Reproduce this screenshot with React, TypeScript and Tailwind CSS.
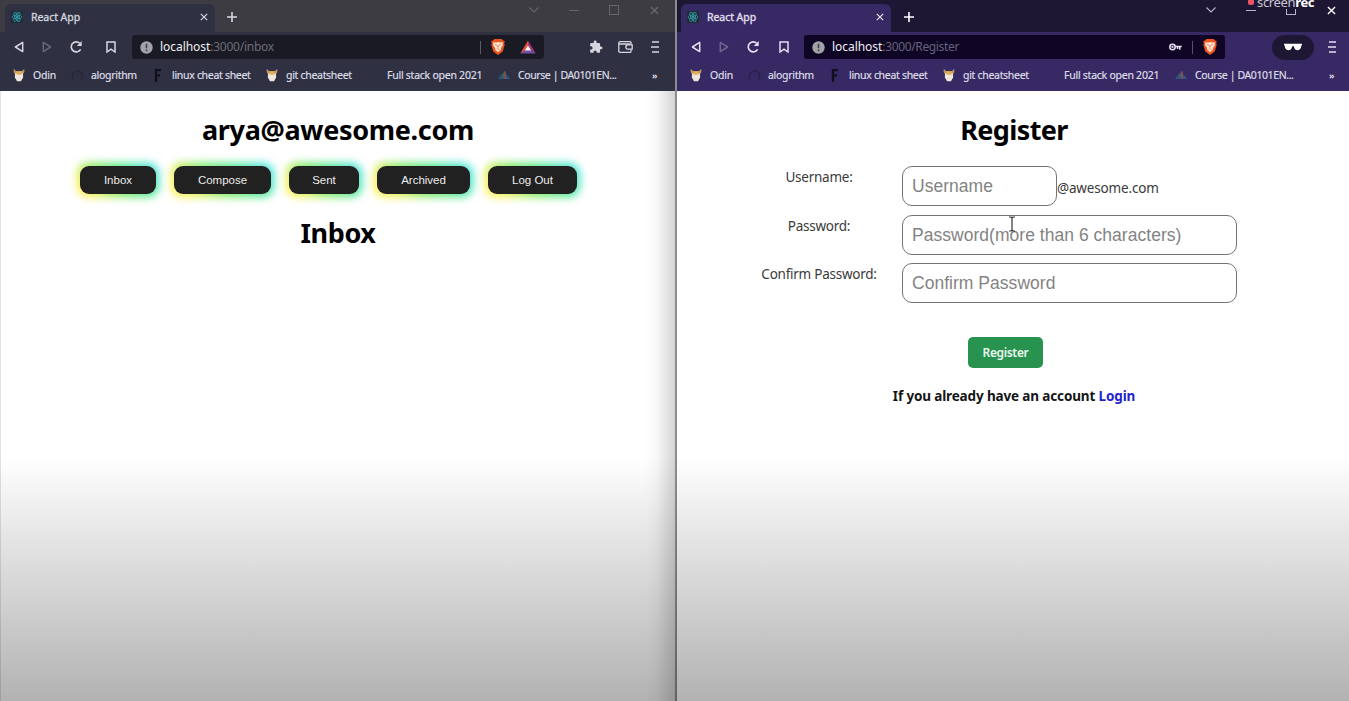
import React from "react";

function ReactLogo() {
  return (
    <svg width="12" height="12" viewBox="0 0 24 24" fill="none" stroke="#2f8c98" strokeWidth="1.8">
      <rect width="24" height="24" fill="#1f2d38" stroke="none" />
      <ellipse cx="12" cy="12" rx="10" ry="4" />
      <ellipse cx="12" cy="12" rx="10" ry="4" transform="rotate(60 12 12)" />
      <ellipse cx="12" cy="12" rx="10" ry="4" transform="rotate(120 12 12)" />
      <circle cx="12" cy="12" r="2" fill="#4fb3c0" />
    </svg>
  );
}

function CrossIcon({ size }: { size: number }) {
  return (
    <svg width={size} height={size} viewBox="0 0 10 10" stroke="currentColor" strokeWidth="1.5">
      <path d="M1 1l8 8M9 1l-8 8" />
    </svg>
  );
}

function PlusIcon() {
  return (
    <svg width="10" height="10" viewBox="0 0 10 10" stroke="currentColor" strokeWidth="1.6">
      <path d="M5 0v10M0 5h10" />
    </svg>
  );
}

function TriangleIcon({ flip, dim }: { flip?: boolean; dim?: boolean }) {
  return (
    <svg width="10" height="12" viewBox="0 0 10 12" fill="none" stroke="currentColor" strokeWidth="1.5" strokeLinejoin="round" opacity={dim ? 0.32 : 1}>
      <path d={flip ? "M1.3 1.4v9.2L8.6 6z" : "M8.7 1.4v9.2L1.4 6z"} />
    </svg>
  );
}

function ReloadIcon() {
  return (
    <svg width="14" height="14" viewBox="0 0 14 14" fill="none" stroke="currentColor" strokeWidth="1.700">
      <path d="M11.6 9.3A5 5 0 1 1 10.6 3.2" />
      <path d="M12.7 1v4.900H7.800z" fill="currentColor" stroke="none" />
    </svg>
  );
}

function BookmarkIcon() {
  return (
    <svg width="10" height="12" viewBox="0 0 10 12" fill="none" stroke="currentColor" strokeWidth="1.5">
      <path d="M1 1h8v10L5 8.2 1 11z" />
    </svg>
  );
}

function InfoIcon() {
  return (
    <svg width="13" height="13" viewBox="0 0 13 13">
      <circle cx="6.5" cy="6.5" r="6.2" fill="#a0a3a8" />
      <path d="M6.5 2.7v4.6M6.5 8.6v1.7" stroke="#41424b" strokeWidth="1.6" />
    </svg>
  );
}

function BraveIcon() {
  return (
    <svg width="16" height="18" viewBox="0 0 16 18">
      <path d="M4.3 1h7.4l1.3 1.5 1.8.6-.6 2.2.5 1.5-2 6.8L8 17l-4.7-3.4-2-6.8.5-1.500-.6-2.200L3 2.500z" fill="#ee551f" />
      <path d="M3.300 4.300l2.900.2L8 4.100l1.800.4 2.900-.2.2 2.600-2 3.100.1 1.600L8 14.300l-3-2.700.1-1.600-2-3.100z" fill="#fbe3d2" />
      <path d="M4.800 6.200l2 .8L8 9.400l1.200-2.400 2-.8M6.600 11.500L8 10.800l1.400.7" fill="none" stroke="#ee8a60" strokeWidth=".9" />
    </svg>
  );
}

function RewardsIcon() {
  return (
    <svg width="16" height="14" viewBox="0 0 16 14">
      <path d="M8 .5L.3 13.500 8 9z" fill="#e2553b" />
      <path d="M8 .5l7.700 13L8 9z" fill="#a23a76" />
      <path d="M.3 13.500h15.400L8 8.500z" fill="#7150a5" />
      <path d="M8 5.500l-3 5h6z" fill="#fff" />
    </svg>
  );
}

function PuzzleIcon() {
  return (
    <svg width="14" height="14" viewBox="0 0 24 24" fill="currentColor">
      <path d="M20.500 11H19V7a2 2 0 0 0-2-2h-4V3.500a2.500 2.500 0 0 0-5 0V5H4a2 2 0 0 0-2 2v3.800h1.500a2.700 2.700 0 0 1 0 5.400H2V20a2 2 0 0 0 2 2h3.800v-1.500a2.700 2.700 0 0 1 5.400 0V22H17a2 2 0 0 0 2-2v-4h1.500a2.500 2.500 0 0 0 0-5z" />
    </svg>
  );
}

function WalletIcon() {
  return (
    <svg width="15" height="12" viewBox="0 0 15 12" fill="none" stroke="currentColor" strokeWidth="1.300">
      <path d="M13 3.800V1.500A.8.800 0 0 0 12.200.7H2A1.200 1.200 0 0 0 .8 2v8A1.200 1.200 0 0 0 2 11.300h10.200a.8.800 0 0 0 .8-.8V8.300M1 3h11" />
      <path d="M14.200 3.900H10a2.100 2.100 0 0 0 0 4.300h4.200z" />
    </svg>
  );
}

function MenuIcon() {
  return (
    <svg width="9" height="12" viewBox="0 0 9 12" stroke="currentColor" strokeWidth="1.300">
      <path d="M1 1h7M0 6h8M1 11h7" />
    </svg>
  );
}

function KeyIcon() {
  return (
    <svg width="13" height="8" viewBox="0 0 13 8" fill="none" stroke="currentColor" strokeWidth="1.500">
      <circle cx="3.500" cy="4" r="2.700" />
      <path d="M6.200 3.400h6.500M10.800 3.400v3.400M8.600 3.400V6" />
      <circle cx="3.500" cy="4" r=".4" />
    </svg>
  );
}

function GlassesIcon() {
  return (
    <svg width="18" height="8" viewBox="0 0 18 8" fill="#fff">
      <path d="M0 .8h18v1.300l-.7.500c-.2 2.800-1.200 4.600-3.600 4.600-2.300 0-3.500-1.400-3.800-3.800L9 2.900l-.9.500C7.800 5.800 6.600 7.200 4.300 7.200 1.900 7.200.9 5.400.7 2.600L0 2.100z" />
    </svg>
  );
}

function ChevronIcon() {
  return (
    <svg width="10" height="6" viewBox="0 0 10 6" fill="none" stroke="currentColor" strokeWidth="1.100">
      <path d="M.5.500L5 5 9.500.500" />
    </svg>
  );
}

function OdinIcon() {
  return (
    <svg width="12" height="14" viewBox="0 0 12 14">
      <path d="M.8.800l2 2.200h6.400l2-2.200.2 3.200-1.600 2.500H2.200L.6 4z" fill="#c59562" />
      <path d="M2 5.500h8l.1 4L8 13.300H4L1.900 9.500z" fill="#eee6df" />
      <path d="M3.200 3.400h5.600L8.300 6.800H3.700z" fill="#ddb05b" />
    </svg>
  );
}

function RingIcon() {
  return (
    <svg width="13" height="13" viewBox="0 0 13 13" fill="none" stroke="#171927" strokeWidth="1.500" opacity=".45">
      <path d="M2.500 10.500a5.200 5.200 0 1 1 8 0" />
    </svg>
  );
}

function LetterIcon() {
  return (
    <svg width="8" height="13" viewBox="0 0 8 13" stroke="#10101c" strokeWidth="2.300" fill="none">
      <path d="M2 13V1.200h5M2 6.300h4" />
    </svg>
  );
}

function CourseIcon() {
  return (
    <svg width="12" height="10" viewBox="0 0 12 10" opacity=".65">
      <path d="M0 9l3-4 2 4z" fill="#286f9b" />
      <path d="M3 5l3-3v7H5z" fill="#367f78" />
      <path d="M6 1l2 1v7H6z" fill="#a95f4b" />
      <path d="M8 4l4 5H8z" fill="#3c6dad" />
    </svg>
  );
}

function Bookmark({ icon, text, box, track }: { icon: React.ReactNode; text: string; box: string; track: string }) {
  return (
    <div className={`flex shrink-0 items-center ${box}`}>
      <span className="mr-1.5 flex w-4 shrink-0 justify-center">{icon}</span>
      <span className={`whitespace-nowrap [-webkit-text-stroke:0.2px] ${track}`}>{text}</span>
    </div>
  );
}

function BookmarkBar() {
  return (
    <div className="flex h-[29px] items-center pb-[3px] pl-[11px] text-[10.5px] leading-none text-[#dddce6]">
      <Bookmark icon={<OdinIcon />} text="Odin" box="w-[58px]" track="tracking-[-0.2px]" />
      <Bookmark icon={<RingIcon />} text="alogrithm" box="w-[81px]" track="tracking-[-0.3px]" />
      <Bookmark icon={<LetterIcon />} text="linux cheat sheet" box="w-[114px]" track="tracking-[-0.3px]" />
      <Bookmark icon={<OdinIcon />} text="git cheatsheet" box="w-[101px]" track="tracking-[-0.3px]" />
      <Bookmark icon={<span />} text="Full stack open 2021" box="w-[131px]" track="tracking-[-0.25px]" />
      <Bookmark icon={<CourseIcon />} text="Course | DA0101EN..." box="w-[156px]" track="tracking-[-0.4px]" />
      <span className="text-[9px] font-bold">»</span>
    </div>
  );
}

function Tab({ className }: { className: string }) {
  return (
    <div className={`flex h-7 w-[210px] items-center self-end rounded-t-md pr-[7px] pb-[2px] pl-[6px] ${className}`}>
      <ReactLogo />
      <span className="ml-[8px] flex-1 text-[10.5px] leading-none tracking-[-0.05px] [-webkit-text-stroke:0.3px]">React App</span>
      <CrossIcon size={8} />
    </div>
  );
}

function InboxWindow() {
  const buttons = [
    { label: "Inbox", size: "w-[76px]" },
    { label: "Compose", size: "w-[97px]" },
    { label: "Sent", size: "w-[70px]" },
    { label: "Archived", size: "w-[93px]" },
    { label: "Log Out", size: "w-[89px]" },
  ];
  return (
    <section className="flex h-full w-[675px] shrink-0 flex-col">
      <header className="h-[91px] shrink-0 bg-[#2f3142] text-[#d5d6df]">
        <div className="flex h-8 items-center bg-[#3d3c42] pl-[5px]">
          <Tab className="bg-[#2f3142]" />
          <span className="mt-[2px] ml-[12px]"><PlusIcon /></span>
          <div className="ml-auto flex items-center pr-[16px] pb-3 text-[#67666d]">
            <ChevronIcon />
            <span className="ml-[30px] h-px w-[10px] bg-current" />
            <span className="ml-[30px] size-[10px] border border-current" />
            <span className="ml-[31px]"><CrossIcon size={9} /></span>
          </div>
        </div>
        <div className="flex h-[30px] items-center">
          <div className="flex w-[132px] items-center pb-px pl-[14px]">
            <TriangleIcon />
            <span className="ml-[18px]"><TriangleIcon flip dim /></span>
            <span className="ml-[17px]"><ReloadIcon /></span>
            <span className="ml-[23px]"><BookmarkIcon /></span>
          </div>
          <div className="flex h-6 w-[412px] items-center rounded-[3px] bg-[#1a1a25] pl-[8px]">
            <InfoIcon />
            <span className="ml-[7px] text-[12px] leading-none tracking-[-0.05px] text-[#eeeef2]">localhost<span className="tracking-[-0.25px] text-[#6c6c75]">:3000/inbox</span></span>
            <span className="mr-[9px] ml-auto h-[13px] w-px bg-[#5c5c66]" />
            <BraveIcon />
            <span className="mr-[8px] ml-[14px]"><RewardsIcon /></span>
          </div>
          <span className="ml-[45px]"><PuzzleIcon /></span>
          <span className="ml-[15px]"><WalletIcon /></span>
          <span className="ml-[18px]"><MenuIcon /></span>
        </div>
        <BookmarkBar />
      </header>
      <main className="flex flex-1 flex-col border-l border-[#e2e2e2]">
        <h1 className="mt-[19px] text-center text-[27px] leading-[40px] font-bold tracking-[-0.32px] text-black">arya@awesome.com</h1>
        <nav className="mt-[16px] flex items-center gap-[18px] pl-[79px]">
          {buttons.map((b) => (
            <div key={b.label} className="relative">
              <div className="absolute -inset-[3px] rounded-[11px] bg-[linear-gradient(45deg,#fff04a_0%,#f3ef4d_18%,#7ce85a_42%,#4ce68a_65%,#3fe0ee_100%)] blur-[4px]" />
              <button className={`relative block h-7 rounded-[9px] bg-[#222122] font-['Liberation_Sans',sans-serif] text-[11.5px] leading-7 text-[#ececec] ${b.size}`}>{b.label}</button>
            </div>
          ))}
        </nav>
        <h2 className="mt-[19px] text-center text-[27px] leading-[40px] font-bold tracking-[-0.4px] text-black">Inbox</h2>
      </main>
    </section>
  );
}

function Field({ label, placeholder, narrow }: { label: string; placeholder: string; narrow?: boolean }) {
  return (
    <div className="flex h-10 items-center">
      <label className="w-[170px] self-start pt-px text-center text-[13.5px] leading-[20px] tracking-[-0.25px] text-[#3a3a3a]">{label}</label>
      <input
        placeholder={placeholder}
        className={`ml-[-2px] h-10 rounded-[10px] border border-[#747474] bg-white pt-px pl-[9px] font-['Liberation_Sans',sans-serif] text-[17.5px] tracking-[0.03px] outline-none placeholder:text-[#838383] ${narrow ? "w-[155px]" : "w-[335px]"}`}
      />
      {narrow && <span className="mt-[4px] text-[13.5px] tracking-[-0.17px] text-[#3a3a3a]">@awesome.com</span>}
    </div>
  );
}

function RegisterWindow() {
  return (
    <section className="flex h-full flex-1 flex-col">
      <header className="h-[91px] shrink-0 bg-[#372963] text-[#e6e0f1]">
        <div className="flex h-8 items-center bg-[#1d1733] pl-[4px]">
          <Tab className="bg-[#372963]" />
          <span className="mt-[2px] ml-[13px] text-white"><PlusIcon /></span>
          <div className="relative ml-auto flex items-center pr-[13px] pb-3 text-[#b9b4c5]">
            <ChevronIcon />
            <span className="ml-[30px] h-px w-[10px] bg-current" />
            <span className="ml-[30px] size-[10px] border border-current" />
            <span className="ml-[31px] text-white"><CrossIcon size={9} /></span>
            <span className="absolute top-[-10px] left-[42px] flex h-[14px] items-center text-[13px] leading-none tracking-[-0.35px] text-[#c8c5d0]">
              <span className="mr-[3px] size-[6px] rounded-[2px] bg-[#ed5565]" />
              <span className="flex h-[14px] items-center bg-[#1d1733]">screen<b className="text-white">rec</b></span>
            </span>
          </div>
        </div>
        <div className="flex h-[30px] items-center">
          <div className="flex w-[127px] items-center pb-px pl-[14px]">
            <TriangleIcon />
            <span className="ml-[18px]"><TriangleIcon flip dim /></span>
            <span className="ml-[17px]"><ReloadIcon /></span>
            <span className="ml-[19px]"><BookmarkIcon /></span>
          </div>
          <div className="flex h-6 w-[421px] items-center rounded-[3px] bg-[#0e0624] pl-[8px]">
            <InfoIcon />
            <span className="ml-[7px] text-[12px] leading-none tracking-[-0.05px] text-[#f0eef5]">localhost<span className="tracking-[-0.35px] text-[#68627b]">:3000/Register</span></span>
            <span className="ml-auto"><KeyIcon /></span>
            <span className="mr-[9px] ml-[10px] h-[13px] w-px bg-[#575069]" />
            <span className="mr-[7px]"><BraveIcon /></span>
          </div>
          <span className="ml-[47px] flex h-[25px] w-[42px] items-center justify-center rounded-full bg-[#1d1733]"><GlassesIcon /></span>
          <span className="ml-[14px]"><MenuIcon /></span>
        </div>
        <BookmarkBar />
      </header>
      <main className="relative flex flex-1 flex-col">
        <h1 className="mt-[19px] pl-[2px] text-center text-[27px] leading-[40px] font-bold tracking-[-0.6px] text-black">Register</h1>
        <form className="mt-[16px] flex flex-col gap-[8.5px] pl-[57px]">
          <Field label="Username:" placeholder="Username" narrow />
          <Field label="Password:" placeholder="Password(more than 6 characters)" />
          <Field label="Confirm Password:" placeholder="Confirm Password" />
          <button type="button" className="mt-[25px] ml-[234px] h-[31px] w-[75px] rounded-[5px] bg-[#27934f] pt-[2px] text-[12px] font-semibold tracking-[-0.35px] text-[#eaf7ee]">Register</button>
        </form>
        <p className="mt-[18px] pl-[2px] text-center text-[13.5px] leading-[20px] font-bold tracking-[-0.14px] text-[#151515]">If you already have an account <span className="text-[#2424cb]">Login</span></p>
        <svg className="absolute top-[125px] left-[331px]" width="8" height="16" viewBox="0 0 8 16" fill="none" stroke="#333" strokeWidth="1.200">
          <path d="M1 1h2l1 1 1-1h2M4 2v12M1 15h2l1-1 1 1h2" />
        </svg>
      </main>
    </section>
  );
}

export default function App() {
  return (
    <div className="relative flex h-[701px] w-[1349px] overflow-hidden bg-white font-['Noto_Sans',sans-serif]">
      <InboxWindow />
      <div className="w-[2px] shrink-0 bg-[#8c8c8c]" />
      <RegisterWindow />
      <div className="pointer-events-none absolute top-[91px] left-[645px] h-[610px] w-[30px] bg-[linear-gradient(to_right,transparent,rgba(0,0,0,0.03)_40%,rgba(0,0,0,0.17))]" />
      <div className="pointer-events-none absolute inset-x-0 top-[457px] bottom-0 bg-[linear-gradient(to_bottom,rgba(0,0,0,0),rgba(0,0,0,0.08)_25%,rgba(0,0,0,0.3))]" />
    </div>
  );
}
